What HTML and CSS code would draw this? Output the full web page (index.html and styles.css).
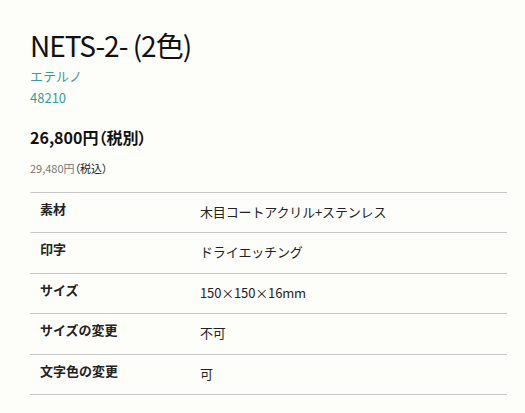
FILE: index.html
```html
<!DOCTYPE html>
<html lang="ja">
<head>
<meta charset="utf-8">
<link rel="stylesheet" href="styles.css">
</head>
<body>
<main class="product">
  <h1 class="title">NETS-2- (2色)</h1>
  <p class="brand">エテルノ</p>
  <p class="code">48210</p>
  <p class="price">26,800円<span class="tax">（税別）</span></p>
  <p class="price-sub"><span class="num">29,480円</span>（税込）</p>
  <div class="specs">
    <div class="row"><div class="label">素材</div><div class="value">木目コートアクリル+ステンレス</div></div>
    <div class="row"><div class="label">印字</div><div class="value">ドライエッチング</div></div>
    <div class="row"><div class="label">サイズ</div><div class="value">150×150×16mm</div></div>
    <div class="row"><div class="label">サイズの変更</div><div class="value">不可</div></div>
    <div class="row"><div class="label">文字色の変更</div><div class="value">可</div></div>
  </div>
</main>
</body>
</html>
```
FILE: styles.css
```css
html, body {
  margin: 0;
  padding: 0;
  background: #fdfdf9;
}
body {
  font-family: "Noto Sans CJK JP", "Noto Sans", sans-serif;
  color: #1a1a1a;
}
.product {
  padding: 27px 18px 0 30px;
}
.title {
  margin: 0;
  font-size: 28px;
  font-weight: 400;
  line-height: 36px;
  letter-spacing: -1px;
  color: #111;
}
.brand, .code {
  margin: 0;
  font-size: 13px;
  line-height: 22px;
  color: #3b9c9c;
}
.brand { margin-top: 2px; }
.price {
  margin: 16px 0 0;
  font-size: 16px;
  font-weight: 700;
  line-height: 24px;
  color: #111;
}
.price .tax {
  font-feature-settings: "palt";
}
.price-sub {
  margin: 10px 0 0;
  font-size: 11px;
  line-height: 18px;
  color: #222;
  font-feature-settings: "palt";
}
.price-sub .num {
  color: #777;
  font-feature-settings: normal;
}
.specs {
  margin-top: 15px;
  width: 477px;
  border-top: 1px solid #c8c8c8;
}
.row {
  display: flex;
  height: 39.4px;
  border-bottom: 1px solid #c8c8c8;
}
.label {
  width: 160px;
  padding: 6px 0 0 10px;
  font-size: 13px;
  font-weight: 700;
  line-height: 20px;
  color: #222;
}
.value {
  padding-top: 9px;
  font-size: 13px;
  line-height: 20px;
  letter-spacing: -0.15px;
  color: #222;
}
```
